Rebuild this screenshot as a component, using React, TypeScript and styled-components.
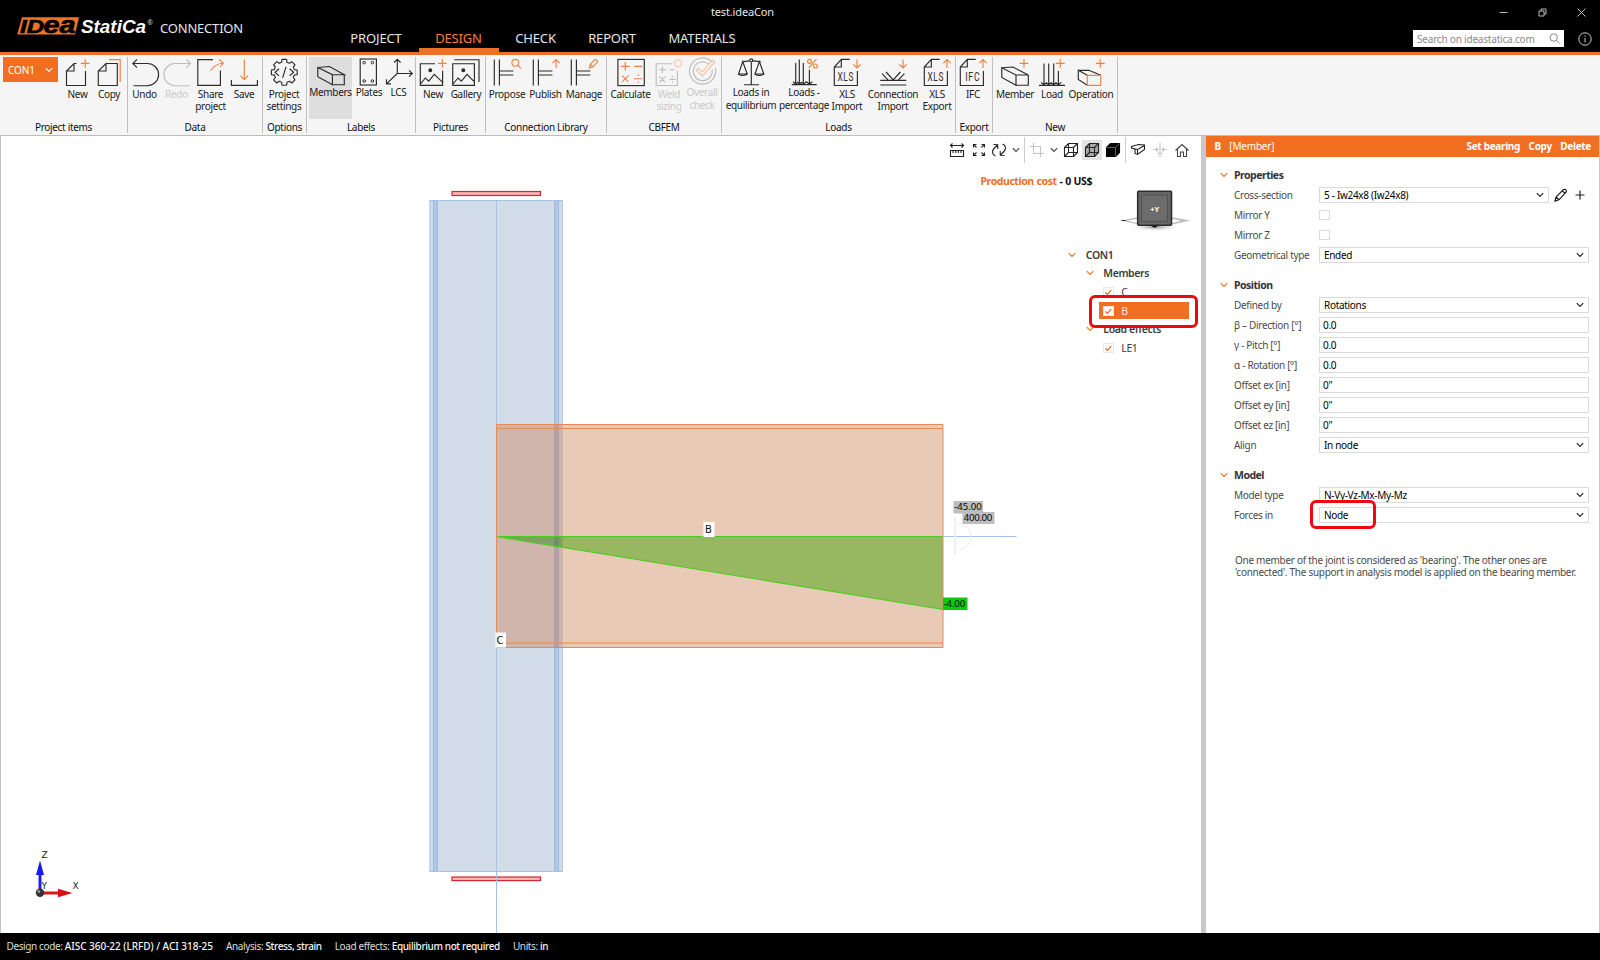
import React, { ReactNode } from "react"
import styled, { createGlobalStyle, css } from "styled-components"

const orange = "#f26f21"
const ink = "#2b2b2b"
const sans = `"Noto Sans", "Open Sans", sans-serif`

const Global = createGlobalStyle`
  * { box-sizing: border-box; }
  body {
    margin: 0;
    background: #fff;
    font-family: ${sans};
    font-size: 10px;
    letter-spacing: -.31px;
    color: #111;
    overflow: hidden;
  }
  svg { display: block; flex: none; }
`

const App = styled.div`
  display: flex;
  flex-direction: column;
  width: 1600px;
  height: 960px;
`

/* ---------- title bar ---------- */

const TopBar = styled.header`
  height: 55px;
  background: #000;
  border-bottom: 3px solid #ea7126;
  color: #e6e6e6;
  display: grid;
  grid-template-columns: 333.5px 419px 1fr;
  position: relative;
`

const Brand = styled.div`
  display: flex;
  padding: 13px 0 0 15px;
`

const Product = styled.span`
  margin: 6px 0 0 3px;
  font-size: 13px;
  line-height: 18px;
  letter-spacing: -.2px;
`

const Tabs = styled.nav`
  height: 52px;
  display: flex;
  align-items: flex-end;
`

const Tab = styled.div<{ $w: number, $active?: boolean }>`
  width: ${p => p.$w}px;
  height: 29px;
  text-align: center;
  font-size: 13px;
  line-height: 30px;
  letter-spacing: -.15px;
  color: ${p => p.$active ? "#f58233" : "#e6e6e6"};
  border-bottom: 4px solid ${p => p.$active ? orange : "transparent"};
`

const WindowTitle = styled.div`
  position: absolute;
  top: 4px;
  left: 711px;
  font-size: 11px;
  line-height: 16px;
  letter-spacing: -.15px;
`

const TopRight = styled.div`
  display: flex;
  flex-direction: column;
  align-items: flex-end;
`

const WindowButtons = styled.div`
  display: flex;
  height: 30px;
  gap: 28px;
  padding: 7px 13px 0 0;
`

const SearchRow = styled.div`
  display: flex;
  align-items: center;
  gap: 14px;
  padding-right: 8px;
`

const Search = styled.div`
  width: 151px;
  height: 17px;
  background: #fff;
  color: #8b8b8b;
  display: flex;
  align-items: center;
  justify-content: space-between;
  padding: 0 4px 0 4px;
  letter-spacing: -.2px;
`

/* ---------- ribbon ---------- */

const RibbonBar = styled.div`
  height: 81px;
  background: #f5f5f5;
  border-bottom: 1px solid #bdbdbd;
  display: flex;
  padding-top: 2px;
`

const Group = styled.section<{ $w: number, $pad: number }>`
  width: ${p => p.$w}px;
  height: 76px;
  border-right: 1px solid #bfbfbf;
  display: flex;
  flex-direction: column;
  justify-content: space-between;
  > div { padding-left: ${p => p.$pad}px; }
`

const Items = styled.div`
  display: flex;
`

const GroupName = styled.footer`
  height: 13px;
  line-height: 13px;
  margin-bottom: -1px;
  text-align: center;
`

const Tool = styled.button<{ $w: number, $raised?: boolean, $active?: boolean, $off?: boolean }>`
  width: ${p => p.$w}px;
  height: 62px;
  border: 0;
  padding: 0;
  background: ${p => p.$active ? "#dedede" : "none"};
  color: ${p => p.$off ? "#c9c9c9" : "#1a1a1a"};
  font: inherit;
  letter-spacing: inherit;
  line-height: 12.5px;
  display: flex;
  flex-direction: column;
  align-items: center;
  white-space: pre;
  span { margin-top: ${p => p.$raised ? -1 : .5}px; }
`

const ProjectItem = styled.button`
  width: 55px;
  height: 25px;
  margin-right: 3px;
  border: 0;
  padding: 0 5px;
  background: ${orange};
  color: #fff;
  font: inherit;
  letter-spacing: -.1px;
  display: flex;
  align-items: center;
  justify-content: space-between;
`

/* ---------- work area ---------- */

const Work = styled.main`
  height: 797px;
  display: flex;
`

const Viewport = styled.div`
  width: 1201px;
  border-left: 1px solid #c4c4c4;
  position: relative;
`

const Scene = styled.svg`
  position: absolute;
  top: 0;
  left: -1px;
`

const Overlay = styled.div`
  position: absolute;
  inset: 0 0 auto auto;
  width: 256px;
  display: flex;
  flex-direction: column;
`

const ViewTools = styled.div`
  display: flex;
  align-items: center;
  height: 27px;
  padding-left: 1px;
`

const ViewTool = styled.div<{ $w: number, $active?: boolean }>`
  width: ${p => p.$w}px;
  height: 20px;
  background: ${p => p.$active ? "#e4e4e4" : "none"};
  display: flex;
  align-items: center;
  justify-content: center;
`

const Sep = styled.div`
  width: 1px;
  height: 26px;
  margin: 0 1px;
  background: #ccc;
`

const Cost = styled.div`
  padding: 10.5px 0 0 35.5px;
  font-size: 10.5px;
  line-height: 14px;
  font-weight: 700;
  letter-spacing: -.43px;
  word-spacing: .5px;
  em { font-style: normal; color: ${orange}; }
`

const CubeSlot = styled.div`
  padding: 1.5px 0 0 174px;
`

const Tree = styled.ul`
  list-style: none;
  margin: 10.5px 0 0;
  padding: 0;
  color: #3b3b3b;
`

const TreeRow = styled.li<{ $depth: number, $bold?: boolean }>`
  height: 18.5px;
  padding-left: ${p => 123.3 + p.$depth * 17.5}px;
  display: flex;
  align-items: center;
  gap: 9.5px;
  font-size: 10.5px;
  font-weight: ${p => p.$bold ? 600 : 400};
  letter-spacing: -.4px;
`

const Leaf = styled.div<{ $selected?: boolean }>`
  width: 90px;
  height: 17px;
  margin: 1px 0 0 -4px;
  padding-left: 4px;
  display: flex;
  align-items: center;
  gap: 7.5px;
  ${p => p.$selected && css`
    background: ${orange};
    color: #ffe3cf;
  `}
`

const Tick = styled.div`
  width: 10.5px;
  height: 10.5px;
  background: #fff;
  border: 1px solid #e8e8e8;
`

const Highlight = styled.div<{ $x: number, $y: number, $w: number, $h: number }>`
  position: absolute;
  left: ${p => p.$x}px;
  top: ${p => p.$y}px;
  width: ${p => p.$w}px;
  height: ${p => p.$h}px;
  border: 3px solid #f00810;
  border-radius: 6px;
`

const Splitter = styled.div`
  width: 5px;
  background: #c8c8c8;
`

/* ---------- property panel ---------- */

const Panel = styled.aside`
  flex: 1;
  border-right: 1px solid #c8c8c8;
  position: relative;
`

const PanelHead = styled.div`
  height: 20.5px;
  background: ${orange};
  color: #fff;
  display: flex;
  align-items: center;
  gap: 8.5px;
  padding: 0 8px 0 8.5px;
  font-weight: 700;
  i { font-style: normal; font-weight: 400; flex: 1; letter-spacing: -.2px; }
`

const Section = styled.section`
  padding: 8.5px 10px 0 14px;
  & + & { padding-top: 10px; }
`

const SectionName = styled.h2`
  margin: 0;
  height: 20px;
  display: flex;
  align-items: center;
  gap: 6px;
  font-size: 10.5px;
  font-weight: 700;
  letter-spacing: -.5px;
  color: #333;
`

const Row = styled.label`
  height: 20px;
  padding-left: 14px;
  display: grid;
  grid-template-columns: 85px 1fr auto;
  align-items: center;
  color: #4a4a4a;
`

const Field = styled.div<{ $text: boolean }>`
  height: 16.5px;
  border: 1px solid #dadada;
  padding: 0 4px 0 ${p => p.$text ? 3 : 4}px;
  color: #000;
  display: flex;
  align-items: center;
  justify-content: space-between;
  line-height: 14px;
`

const Box = styled.div`
  width: 10.5px;
  height: 10.5px;
  border: 1px solid #dcdcdc;
`

const RowTools = styled.div`
  width: 40px;
  display: flex;
  align-items: center;
  gap: 7px;
  padding-left: 5px;
`

const Hint = styled.p`
  margin: 28.5px 0 0 29px;
  line-height: 12.7px;
  letter-spacing: -.28px;
  color: #4a4a4a;
  white-space: pre;
`

/* ---------- status bar ---------- */

const Status = styled.footer`
  height: 27px;
  background: #000;
  color: #ddd;
  display: flex;
  align-items: center;
  gap: 13px;
  padding: 0 0 1px 6.5px;
  letter-spacing: -.38px;
  b { font-weight: 500; color: #f4f4f4; }
`

const Code = styled.b`
  letter-spacing: -.03px;
`

/* ---------- icons ---------- */

type IconProps = { children: ReactNode, faded?: boolean }

const Icon = ({ children, faded }: IconProps) => (
  <svg width="34" height="30" viewBox="0 0 34 30" fill="none" strokeWidth="1.15"
    stroke={faded ? "#bdbdbd" : ink}>
    {children}
  </svg>
)

const O = ({ d }: { d: string }) => <path d={d} stroke="#ee8240" />
const Plus = ({ x = 25.5, y = 6.3 }) => <O d={`M${x - 4.4} ${y}h8.8M${x} ${y - 4.4}v8.8`} />
const Up = ({ x }: { x: number }) => <O d={`M${x} 11V2.5M${x - 3.7} 6.2L${x} 2.5l3.7 3.7`} />
const Down = ({ x }: { x: number }) => <O d={`M${x} 2.5V11M${x - 3.7} 7.3L${x} 11l3.7-3.7`} />

const Chevron = ({ color = "#444" }) => (
  <svg width="8" height="6" viewBox="0 0 8 6" fill="none" stroke={color} strokeWidth="1.1">
    <path d="M.8 1.2L4 4.5l3.2-3.3" />
  </svg>
)

const gearPath = () => {
  const pts: string[] = []
  for (let i = 0; i < 8; i++) {
    const steps = [[-15, 10.4], [-10, 13.1], [10, 13.1], [15, 10.4]]
    steps.forEach(([da, r]) => {
      const a = (i * 45 + da) * Math.PI / 180
      pts.push(`${(17.3 + r * Math.sin(a)).toFixed(1)} ${(15.3 - r * Math.cos(a)).toFixed(1)}`)
    })
  }
  return `M${pts.join("L")}Z`
}

const Beam = () => <path d="M3.8 10.8L18 18v10.2L3.8 20.5zM3.8 10.8l11-.8L30.3 18H18M30.3 18v10.2H18" />

const Sheet = ({ text }: { text: string }) => (
  <>
    <path d="M19.7 2.4H11.3L4.3 10V28.5H27.4V14M11.3 2.4V10h-7" />
    <text x={text === "IFC" ? 9.3 : 7.5} y="23.7" fontSize="12.5" textLength={text === "IFC" ? 15 : 16.5}
      lengthAdjust="spacingAndGlyphs" fontFamily="Roboto, sans-serif" letterSpacing="1" fill={ink} stroke="none">{text}</text>
  </>
)

const Joint = () => <path d="M4.3 2.5v26M9.4 2.5v26M9.4 14h14M9.4 18h14" />

const icons: Record<string, ReactNode> = {
  newItem: <><path d="M15.5 6.5H13L5.5 14V28.5H24.5V14M13 6.5V14H5.5" /><Plus x={24.2} /></>,
  copy: <><path d="M25.3 6.5H14L6.3 14V28.5H25.3zM14 6.5V14H6.3" /><O d="M17 2.6H28.2V25" /></>,
  undo: <path d="M5 6.5H19.5a11.1 11.1 0 0 1 0 22.2H5.5M9 2.4L4.8 6.5 9 10.6" />,
  redo: <path d="M30.5 6.5H15a11.1 11.1 0 0 0 0 22.2H30M26.3 2.4l4.2 4.1-4.2 4.1" />,
  share: <><path d="M19 2.6H3.8V28.4H26.4V13.5" /><O d="M16.5 13.7Q21 7 29 6M25 2.5L29.3 6 26.3 10" /></>,
  save: <><path d="M4.4 23V28.3H30.4V23" /><O d="M17.3 2.6V22.7M13.4 18.7l3.9 4 3.9-4" /></>,
  gear: <><path d={gearPath()} strokeLinejoin="round" /><path d="M12 11.7L8 15.3l4 3.6M22.6 11.7l4 3.6-4 3.6M19 9.8L15.6 20.8" /></>,
  members: <path d="M3.8 10.5L18.4 17.7V27.7L3.8 19.7zM3.8 10.5l11.7-1L30.3 17.7H18.4M30.3 17.7v10H18.4" />,
  plates: <>
    <rect x="8.2" y="2" width="16.2" height="26" />
    <g strokeWidth="1"><circle cx="12.2" cy="5.6" r="1.3" /><circle cx="20.4" cy="5.6" r="1.3" /><circle cx="12.2" cy="24" r="1.3" /><circle cx="20.4" cy="24" r="1.3" /></g>
  </>,
  lcs: <path d="M15.3 2.3v14.2L4.5 26.8M15.3 16.5H30M12 5.5l3.3-3.2 3.3 3.2M27 13.3l3.3 3.2-3.3 3.2M4.5 22.3v4.5H9" />,
  picture: <><path d="M19 6.7H4.3V28.4H26.6V13.7M4.5 27L9.3 21l3.4 3.2L18.3 17.3l8.3 8" /><circle cx="14.3" cy="13.3" r="1.4" fill={ink} /><Plus x={26.3} /></>,
  gallery: <><path d="M3.7 6.7H25.4V28.4H3.7zM5.3 2.7H30V25M4 27L9 21l3.4 3.2L18 17.3l7.4 7.5" /><circle cx="14.3" cy="13.3" r="1.4" fill={ink} /></>,
  propose: <><Joint /><circle cx="25.3" cy="5.8" r="3.4" stroke="#ee8240" /><O d="M27.7 8.2l3.2 3.2" /></>,
  publish: <><Joint /><Up x={27.2} /></>,
  manage: <><Joint /><O d="M22.3 11l1-3.8 4.7-4.6q2.6-.3 2.4 2.7l-4.6 4.7zM23.3 7.2l2.5 2.8" /></>,
  calculate: <><rect x="3.9" y="2.4" width="26.4" height="26.2" /><O d="M7 9.3h8.6M11.3 5v8.6M20.2 9.3h8.2M8.2 18.6l6.2 6.2M14.4 18.6l-6.2 6.2M20 21.7h8.4M24.2 17.3v1.7M24.2 24.4v1.7" /></>,
  weld: <>
    <path d="M19.7 6.7H4.2V28.5H25.4V13.7M7 12.7h6.8M10.4 9.3v6.8M17.3 12.7h5.2M7.3 19.3l6 6M13.3 19.3l-6 6M17.7 22.3h6M20.7 19v1.4M20.7 24.2v1.4" />
    <g stroke="#f6cdb2"><circle cx="26" cy="6.3" r="3.2" /><circle cx="26" cy="6.3" r="4.4" strokeDasharray="1 2.4" /></g>
  </>,
  overall: <>
    <path d="M26.5 4.5A13.1 13.1 0 1 0 30.3 11" /><path d="M24 7.2A9.4 9.4 0 1 0 27 12.5" />
    <path d="M11.5 13.5l2-2 3.7 3.5L27.5 3l2.4 2L17.4 19z" stroke="#f6c3a2" />
  </>,
  scale: <>
    <path d="M17.3 5.2V27.5M10 27.7H25M8.3 4.6q4-.2 7.4-1M26.7 4.6q-4-.2-7.8-1M8.7 4.6L4.6 17h8.6zM25.4 4.6L21 17h8.8z" />
    <circle cx="17.3" cy="3.4" r="1.5" /><path d="M4.3 17q4.4 3 9 0M20.8 17q4.4 3 9 0" />
  </>,
  percentage: <>
    <path d="M8.7 6V27M12.3 2.6V27M16.3 6V27M22.4 12.7V27M4.7 27.6h25M6 24.8l2.7 2.4 1.9-1.8 1.9 1.8 1.8-1.8 2 1.8 3.1-2.4 3 2.4 3-2.4" />
    <O d="M29.5 2.2L21.6 11" /><circle cx="22.6" cy="4.3" r="2" stroke="#ee8240" /><circle cx="28.4" cy="9" r="2" stroke="#ee8240" />
  </>,
  xlsIn: <><Sheet text="XLS" /><Down x={27} /></>,
  xlsOut: <><Sheet text="XLS" /><Up x={27} /></>,
  connection: <><path d="M4.3 28h26M4.3 23.3h26M6 16.7l6.2 6.4M10 15l7.2 8 7.2-8M28.4 16.7l-6.2 6.4" /><Down x={27} /></>,
  ifc: <><Sheet text="IFC" /><Up x={27} /></>,
  member: <><Beam /><Plus x={26} /></>,
  load: <><path d="M9 6.5V27M13.7 6.5V27M18.7 6.5V27M23.4 14V27M4 28.3h26M6 25.4l3 2.4 2.4-2 2.3 2 2.5-2 2.5 2 2.3-2 2.4 2 3-2.4" /><Plus x={25.3} /></>,
  operation: <><path d="M13.3 18.3L4.3 13.3V22.5l9 5.7M4.3 13.3H14.8l12 5" /><O d="M13.3 18.3H26.8V28.3H13.3z" /><Plus x={26.3} /></>,
}

/* ---------- ribbon data ---------- */

type ToolDef = [icon: string, label: string, width: number, flags?: string]
type GroupDef = { name: string, w: number, pad: number, tools: ToolDef[] }

const groups: GroupDef[] = [
  { name: "Project items", w: 128, pad: 3, tools: [["newItem", "New", 33], ["copy", "Copy", 30]] },
  { name: "Data", w: 135, pad: 1, tools: [["undo", "Undo", 31], ["redo", "Redo", 33, "off"], ["share", "Share\nproject", 35], ["save", "Save", 32]] },
  { name: "Options", w: 44, pad: 0, tools: [["gear", "Project\nsettings", 42]] },
  { name: "Labels", w: 109, pad: 2, tools: [["members", "Members", 43, "raised active"], ["plates", "Plates", 34, "raised"], ["lcs", "LCS", 25, "raised"]] },
  { name: "Pictures", w: 70, pad: 0, tools: [["picture", "New", 34], ["gallery", "Gallery", 32]] },
  { name: "Connection Library", w: 121, pad: 2, tools: [["propose", "Propose", 38], ["publish", "Publish", 39], ["manage", "Manage", 38]] },
  { name: "CBFEM", w: 115, pad: 3, tools: [["calculate", "Calculate", 41], ["weld", "Weld\nsizing", 36, "off"], ["overall", "Overall\ncheck", 30, "off raised"]] },
  { name: "Loads", w: 234, pad: 3, tools: [["scale", "Loads in\nequilibrium", 52, "raised"], ["percentage", "Loads -\npercentage", 54, "raised"], ["xlsIn", "XLS\nImport", 32], ["connection", "Connection\nImport", 60], ["xlsOut", "XLS\nExport", 28]] },
  { name: "Export", w: 37, pad: 0, tools: [["ifc", "IFC", 34]] },
  { name: "New", w: 125, pad: 2, tools: [["member", "Member", 40], ["load", "Load", 34], ["operation", "Operation", 44]] },
]

function renderGroup(group: GroupDef, index: number) {
  return (
    <Group key={group.name} $w={group.w} $pad={group.pad}>
      <Items>
        {index === 0 && <ProjectItem>CON1 <Chevron color="#fff" /></ProjectItem>}
        {group.tools.map(([icon, label, w, flags = ""]) => (
          <Tool key={icon} $w={w} $raised={flags.includes("raised")}
            $active={flags.includes("active")} $off={flags.includes("off")}>
            <Icon faded={flags.includes("off")}>{icons[icon]}</Icon>
            <span>{label}</span>
          </Tool>
        ))}
      </Items>
      <GroupName>{group.name}</GroupName>
    </Group>
  )
}

const logoFont = { fontFamily: "Liberation Sans, sans-serif", fontWeight: 700, fontStyle: "italic", letterSpacing: 0 }

const Logo = () => (
  <svg width="142" height="26" viewBox="15 13 142 26">
    <path d="M22 17.3H79L75 34.5H17.3z" fill="#ee7426" />
    <g {...logoFont} fill="#000" stroke="#000" strokeWidth=".7">
      <text x="20" y="32.6" fontSize="18.5" textLength="24" lengthAdjust="spacingAndGlyphs">ID</text>
      <text x="43.5" y="32.6" fontSize="23" textLength="32" lengthAdjust="spacingAndGlyphs">ea</text>
    </g>
    <text x="81" y="33" {...logoFont} fontSize="18" textLength="65" lengthAdjust="spacingAndGlyphs" fill="#fff">StatiCa</text>
    <text x="147" y="25" fontSize="7" fill="#ccc" letterSpacing="0">®</text>
  </svg>
)

/* ---------- 3D scene, in window coordinates ---------- */

const tag = { fontFamily: "DejaVu Sans, sans-serif", letterSpacing: 0 }

const Model = () => (
  <Scene width="1201" height="797" viewBox="0 136 1201 797" fill="none">
    <g>
      <rect x="429.5" y="200.5" width="133" height="671" fill="#d3dde9" />
      <path d="M435 200.5v671M556.5 200.5v671" stroke="#b0c6e5" strokeWidth="4.5" />
      <path d="M433.5 200.5v671M437.5 200.5v671M554.5 200.5v671M558.7 200.5v671" stroke="#9fbbe2" />
      <rect x="430" y="200.5" width="132.3" height="671" stroke="#a4c1e8" />
    </g>
    <g fill="#ffb3b3" stroke="#cc2b30" strokeWidth="1.2">
      <rect x="452" y="191.5" width="88.5" height="4" />
      <rect x="452" y="877" width="88.5" height="3.6" />
    </g>
    <rect x="496.5" y="424.5" width="446.5" height="223" fill="#e9cab6" />
    <rect x="496.5" y="424.5" width="66" height="223" fill="#cfb5ab" />
    <path d="M556.5 424.5v223" stroke="#b49fa8" strokeWidth="5" />
    <path d="M562 424.5v223" stroke="#c2abb0" />
    <path d="M496.5 536.5H943V609.5z" fill="#97b861" />
    <path d="M496.5 536.5H562.5V547.3z" fill="#7ea063" />
    <path d="M554 536.5h5v10l-5-.6z" fill="#6c8f6a" />
    <path d="M943 609.5L496.5 536.5H943" stroke="#4dcb22" strokeWidth="1.1" />
    <path d="M496.5 424.5h446.5v223h-446.5zM496.5 428.5H943M496.5 643H943" stroke="#e58a55" />
    <path d="M496.5 200.5V424M496.5 648V933M943.5 536.5H1016.5" stroke="#a4c1e6" />
    <path d="M955 517V555" stroke="#ededf0" strokeWidth="1.5" />
    <path d="M957 523q14 2 14 13.5T957 550" stroke="#ececee" />

    <g fill="#fff">
      <rect x="703.5" y="522" width="11" height="15" />
      <rect x="495.5" y="632.5" width="10.5" height="15" />
    </g>
    <rect x="953.5" y="501" width="29.5" height="12.5" fill="#bdbdbd" />
    <rect x="962.5" y="512" width="32" height="12" fill="#bdbdbd" />
    <rect x="943" y="597.5" width="24.5" height="12.5" fill="#0acb0a" />
    <g fill="#111" {...tag} fontSize="10">
      <text x="705" y="533">B</text>
      <text x="496.5" y="643.5">C</text>
      <text x="954" y="510" fontSize="9.5" textLength="28">-45.00</text>
      <text x="963.5" y="521" fontSize="9.5" textLength="29">400.00</text>
      <text x="943.5" y="606.7" fontSize="9.5" textLength="22">-4.00</text>
    </g>

    <g>
      <path d="M40 892V872" stroke="#2222ee" strokeWidth="3" />
      <path d="M36 875L40 860.5 44 875z" fill="#1a1aee" />
      <path d="M42 893H59" stroke="#d51818" strokeWidth="3" />
      <path d="M58 888.8L72.5 893 58 897.2z" fill="#d51010" />
      <circle cx="40" cy="892.8" r="4.2" fill="#333" />
      <circle cx="38.8" cy="891.5" r="1.4" fill="#999" />
      <g fill="#222" {...tag} fontSize="9">
        <text x="41.5" y="858">Z</text>
        <text x="72.5" y="889">X</text>
        <text x="41.5" y="889">Y</text>
      </g>
    </g>
  </Scene>
)

const ViewCube = () => (
  <svg width="76" height="46" viewBox="0 0 76 46">
    <defs>
      <radialGradient id="shade">
        <stop offset="0" stopColor="#8a8a8a" />
        <stop offset="1" stopColor="#fff" stopOpacity="0" />
      </radialGradient>
    </defs>
    <ellipse cx="36" cy="38" rx="26" ry="4.5" fill="url(#shade)" />
    <path d="M2 31.5L20 28V29.5L8 31.8 20 34.5V35.8z" fill="#bbb" />
    <path d="M71 31.5L52 28V29.5L62 31.8 52 34.5V35.8z" fill="#bbb" />
    <path d="M2.5 31.5h4" stroke="#222" />
    <rect x="18.7" y="2.2" width="33.8" height="34" rx="1" fill="#666" stroke="#2e2e2e" strokeWidth="1.6" />
    <rect x="22.5" y="6" width="26" height="26.5" fill="#6c6c6c" stroke="#525252" />
    <path d="M31 36.5h9l-4.5 2.2z" fill="#111" />
    <text x="35.7" y="22.5" textAnchor="middle" fontSize="7.5" fontWeight="700" fill="#fff" letterSpacing="0">+Y</text>
  </svg>
)

const Small = ({ children, color = "#222" }: { children: ReactNode, color?: string }) => (
  <svg width="16" height="16" viewBox="0 0 16 16" fill="none" stroke={color} strokeWidth="1.1">{children}</svg>
)

const cube = "M1.5 5.5h9v9h-9zM1.5 5.5L5.5 1.5h9v9L10.5 14.5M10.5 5.5l4-4"

const CheckMark = () => (
  <svg width="8.5" height="8.5" viewBox="0 0 8 8" fill="none" stroke={orange} strokeWidth="1.3"><path d="M1.3 4.2L3.2 6 6.8 2" /></svg>
)

/* ---------- property data ---------- */

type RowDef = [label: string, value?: string, kind?: "select" | "text" | "check"]

const sections: { name: string, rows: RowDef[] }[] = [
  { name: "Properties", rows: [
    ["Cross-section", "5 - Iw24x8 (Iw24x8)"],
    ["Mirror Y", "", "check"],
    ["Mirror Z", "", "check"],
    ["Geometrical type", "Ended"],
  ] },
  { name: "Position", rows: [
    ["Defined by", "Rotations"],
    ["β – Direction [°]", "0.0", "text"],
    ["γ - Pitch [°]", "0.0", "text"],
    ["α - Rotation [°]", "0.0", "text"],
    ["Offset ex [in]", "0\"", "text"],
    ["Offset ey [in]", "0\"", "text"],
    ["Offset ez [in]", "0\"", "text"],
    ["Align", "In node"],
  ] },
  { name: "Model", rows: [
    ["Model type", "N-Vy-Vz-Mx-My-Mz"],
    ["Forces in", "Node"],
  ] },
]

function renderRow([label, value, kind = "select"]: RowDef) {
  return (
    <Row key={label}>
      <span>{label}</span>
      {kind === "check"
        ? <Box />
        : <Field $text={kind === "text"}>{value}{kind === "select" && <Chevron color="#222" />}</Field>}
      {label === "Cross-section" && (
        <RowTools>
          <svg width="14" height="14" viewBox="0 0 14 14" fill="none" stroke="#222" strokeWidth="1.2">
            <path d="M1 13l1-4L9.5 1.5q2.5-.8 3 2L5 11.8zM2 9l3 2.8M8.3 2.8l3 2.8" />
          </svg>
          <svg width="10" height="10" viewBox="0 0 10 10" stroke="#222" strokeWidth="1.2"><path d="M5 .5v9M.5 5h9" /></svg>
        </RowTools>
      )}
    </Row>
  )
}

export default () => {

  return (
    <App>
      <Global />

      <TopBar>
        <Brand>
          <Logo />
          <Product>CONNECTION</Product>
        </Brand>
        <Tabs>
          <Tab $w={85}>PROJECT</Tab>
          <Tab $w={80} $active>DESIGN</Tab>
          <Tab $w={74}>CHECK</Tab>
          <Tab $w={79}>REPORT</Tab>
          <Tab $w={101}>MATERIALS</Tab>
        </Tabs>
        <WindowTitle>test.ideaCon</WindowTitle>
        <TopRight>
          <WindowButtons>
            <svg width="11" height="11" viewBox="0 0 11 11" stroke="#bbb"><path d="M1.5 5.5h8" /></svg>
            <svg width="11" height="11" viewBox="0 0 11 11" fill="none" stroke="#bbb"><path d="M2 4h5v5H2zM4 4V2h5v5H7" /></svg>
            <svg width="11" height="11" viewBox="0 0 11 11" stroke="#bbb"><path d="M1.5 1.5l8 8M9.5 1.5l-8 8" /></svg>
          </WindowButtons>
          <SearchRow>
            <Search>
              Search on ideastatica.com
              <svg width="11" height="11" viewBox="0 0 11 11" fill="none" stroke="#888"><circle cx="4.7" cy="4.5" r="3.7" /><path d="M7.3 7.2l3.2 3.3" /></svg>
            </Search>
            <svg width="14" height="14" viewBox="0 0 14 14" fill="none" stroke="#ccc">
              <circle cx="7" cy="7" r="6.2" /><path d="M7 6v4.5M7 3.5v1.3" />
            </svg>
          </SearchRow>
        </TopRight>
      </TopBar>

      <RibbonBar>{groups.map(renderGroup)}</RibbonBar>

      <Work>
        <Viewport>
          <Model />
          <Overlay>
            <ViewTools>
              <ViewTool $w={22.5}><Small><path d="M1.5 3.5h13M3.5 1.5l-2 2 2 2M12.5 1.5l2 2-2 2M1.5 8.5h13v6h-13zM4 8.5v2.5M6.7 8.5v2.5M9.3 8.5v2.5M12 8.5v2.5" /></Small></ViewTool>
              <ViewTool $w={20.5}><Small><path d="M2.5 5.5v-3h3M2.5 2.5l3 3M10.5 2.5h3v3M13.5 2.5l-3 3M2.5 10.5v3h3M2.5 13.5l3-3M13.5 10.5v3h-3M13.5 13.5l-3-3" /></Small></ViewTool>
              <ViewTool $w={20}><Small><path d="M4.5 14C.5 12.5 1 8.5 3 6.5L6.5 3M2.5 2.5l4.2.2.1 4.2M11.5 2C15.5 3.5 15 7.5 13 9.5L9.5 13M13.5 13.5l-4.2-.2-.1-4.2" /></Small></ViewTool>
              <ViewTool $w={14}><Chevron /></ViewTool>
              <Sep />
              <ViewTool $w={21}><Small color="#c4c4c4"><path d="M4.5 1v10.5H15M1 4.5h10.5V15" /></Small></ViewTool>
              <ViewTool $w={13}><Chevron /></ViewTool>
              <ViewTool $w={22}><Small><path d={cube + "M5.5 1.5v9h9M1.5 14.5l4-4"} /></Small></ViewTool>
              <ViewTool $w={20} $active><Small><path d={cube} fill="#aaa" /><path d="M5.5 1.5v9h9M1.5 14.5l4-4" /></Small></ViewTool>
              <ViewTool $w={22}><Small color="#000"><path d={cube} fill="#000" /><path d="M1.5 5.5h9v9M10.5 5.5l4-4" stroke="#999" strokeWidth=".6" /></Small></ViewTool>
              <Sep />
              <ViewTool $w={22}><Small><path d="M1.5 4.5l7-2 6 .5v4.5l-7 5-2.500-1v-4.500l-3.500-1zM5 7l2.500.5 7-4M7.500 7.500v5" /></Small></ViewTool>
              <ViewTool $w={22}><Small color="#c4c4c4"><path d="M8 1v14M1 7.5h5M4 5.5l2 2-2 2M15 7.5h-5M12 5.5l-2 2 2 2M5.5 11q2.5 2 5 0" /></Small></ViewTool>
              <ViewTool $w={21}><Small color="#444"><path d="M1.5 8.5L8 2.5l6.5 6M3.5 7v7.5h3v-4.5h3v4.5h3V7" /></Small></ViewTool>
            </ViewTools>
            <Cost><em>Production cost</em> - 0 US$</Cost>
            <CubeSlot><ViewCube /></CubeSlot>
            <Tree>
              <TreeRow $depth={0} $bold><Chevron color={orange} />CON1</TreeRow>
              <TreeRow $depth={1} $bold><Chevron color={orange} />Members</TreeRow>
              <TreeRow $depth={2}><Leaf><Tick><CheckMark /></Tick>C</Leaf></TreeRow>
              <TreeRow $depth={2}><Leaf $selected><Tick><CheckMark /></Tick>B</Leaf></TreeRow>
              <TreeRow $depth={1} $bold><Chevron color={orange} />Load effects</TreeRow>
              <TreeRow $depth={2}><Leaf><Tick><CheckMark /></Tick>LE1</Leaf></TreeRow>
            </Tree>
          </Overlay>
          <Highlight $x={1087.5} $y={158.5} $w={109} $h={33} />
        </Viewport>
        <Splitter />
        <Panel>
          <PanelHead>B <i>[Member]</i><span>Set bearing</span><span>Copy</span><span>Delete</span></PanelHead>
          {sections.map(section => (
            <Section key={section.name}>
              <SectionName><Chevron color={orange} />{section.name}</SectionName>
              {section.rows.map(renderRow)}
            </Section>
          ))}
          <Hint>{"One member of the joint is considered as 'bearing'. The other ones are\n'connected'. The support in analysis model is applied on the bearing member."}</Hint>
          <Highlight $x={104} $y={363.5} $w={65.5} $h={29.5} />
        </Panel>
      </Work>

      <Status>
        <span>Design code: <Code>AISC 360-22 (LRFD) / ACI 318-25</Code></span>
        <span>Analysis: <b>Stress, strain</b></span>
        <span>Load effects: <b>Equilibrium not required</b></span>
        <span>Units: <b>in</b></span>
      </Status>
    </App>
  )
}
